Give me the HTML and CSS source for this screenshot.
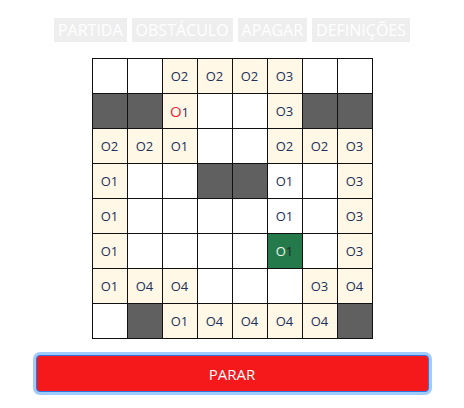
FILE: index.html
```html
<!DOCTYPE html>
<html lang="pt">
<head>
<meta charset="utf-8">
<link rel="stylesheet" href="styles.css">
</head>
<body>
<div class="app">
  <div class="toolbar">
    <button class="tool">PARTIDA</button>
    <button class="tool">OBSTÁCULO</button>
    <button class="tool">APAGAR</button>
    <button class="tool">DEFINIÇÕES</button>
  </div>
  <table class="board">
    <tr><td></td><td></td><td class="c">O2</td><td class="c">O2</td><td class="c">O2</td><td class="c">O3</td><td></td><td></td></tr>
    <tr><td class="d"></td><td class="d"></td><td class="c"><span class="start">O</span>1</td><td></td><td></td><td class="c">O3</td><td class="d"></td><td class="d"></td></tr>
    <tr><td class="c">O2</td><td class="c">O2</td><td class="c">O1</td><td></td><td></td><td class="c">O2</td><td class="c">O2</td><td class="c">O3</td></tr>
    <tr><td class="c">O1</td><td></td><td></td><td class="d"></td><td class="d"></td><td>O1</td><td></td><td class="c">O3</td></tr>
    <tr><td class="c">O1</td><td></td><td></td><td></td><td></td><td>O1</td><td></td><td class="c">O3</td></tr>
    <tr><td class="c">O1</td><td></td><td></td><td></td><td></td><td class="g"><span class="gl">O</span>1</td><td></td><td class="c">O3</td></tr>
    <tr><td class="c">O1</td><td class="c">O4</td><td class="c">O4</td><td></td><td></td><td></td><td class="c">O3</td><td class="c">O4</td></tr>
    <tr><td></td><td class="d"></td><td class="c">O1</td><td class="c">O4</td><td class="c">O4</td><td class="c">O4</td><td class="c">O4</td><td class="d"></td></tr>
  </table>
  <button class="stop">PARAR</button>
</div>
</body>
</html>
```
FILE: styles.css
```css
html, body {
  margin: 0;
  padding: 0;
  background: #ffffff;
}
body {
  padding: 8px;
  font-family: "Open Sans", "Noto Sans", sans-serif;
}
.app {
  display: flex;
  flex-direction: column;
  align-items: center;
}
.toolbar {
  margin-top: 10px;
  display: flex;
  gap: 5px;
  height: 24px;
}
.tool {
  height: 24px;
  border: none;
  background: #eeeeee;
  color: #ffffff;
  font-family: "Open Sans", sans-serif;
  font-size: 16px;
  padding: 0 4px;
  line-height: 24px;
}
.board {
  margin-top: 16px;
  border-collapse: collapse;
}
.board td {
  width: 34px;
  height: 34px;
  padding: 0;
  border: 1px solid #111111;
  text-align: center;
  vertical-align: middle;
  font-size: 13px;
  color: #22305a;
  background: #ffffff;
}
.board td.c {
  background: #fff8e7;
}
.board td.d {
  background: #606060;
}
.board td.g {
  background: #247a4a;
  color: #1a2a2a;
}
.start {
  color: #e8283a;
  font-size: 15px;
}
.gl {
  color: #eef6ee;
}
.stop {
  margin-top: 16px;
  width: 393px;
  height: 37px;
  border: 1px solid #2f74e0;
  border-radius: 4px;
  background: #f5191c;
  color: #ffffff;
  font-family: "Open Sans", sans-serif;
  font-size: 15px;
  box-shadow: 0 0 0 3px #9fcbff;
}
```
